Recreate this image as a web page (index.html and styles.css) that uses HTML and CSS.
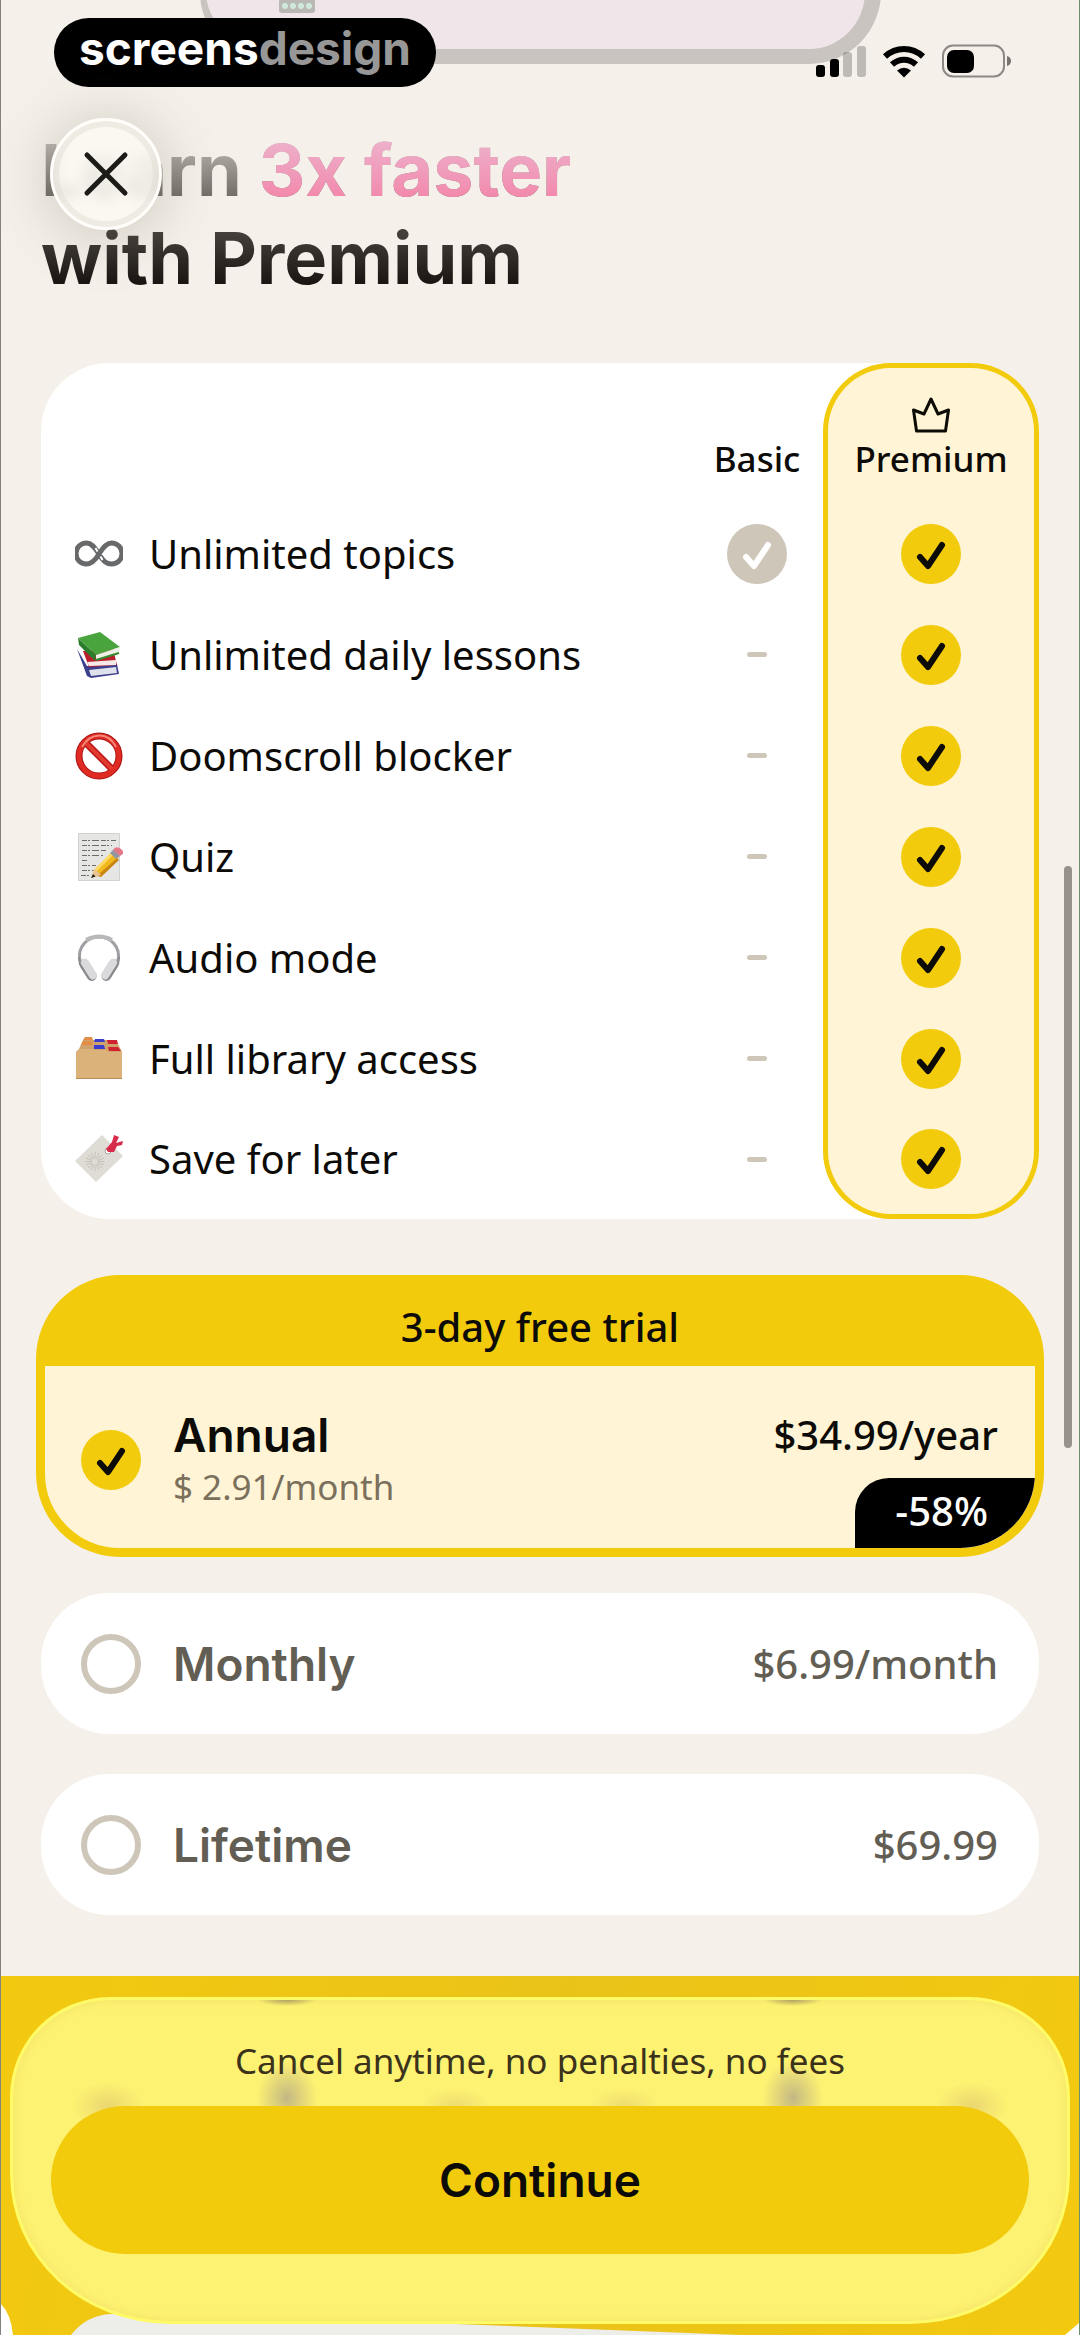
FILE: index.html
```html
<!DOCTYPE html>
<html lang="en">
<head>
<meta charset="utf-8">
<meta name="viewport" content="width=device-width, initial-scale=1">
<title>Learn 3x faster with Premium</title>
<link rel="stylesheet" href="styles.css">
</head>
<body>
<svg class="defs" aria-hidden="true">
  <symbol id="check" viewBox="0 0 60 60"><path d="M19 33 27 42 41 21" fill="none" stroke="currentColor" stroke-width="6" stroke-linecap="round" stroke-linejoin="round"/></symbol>
</svg>
<div class="page">
  <div class="device" aria-hidden="true"><span class="device-chip"><i></i><i></i><i></i><i></i></span></div>

  <div class="status">
    <div class="brand">screens<span>design</span></div>
    <div class="indicators" aria-hidden="true">
      <svg width="50" height="34" viewBox="0 0 50 34"><rect x="0" y="21" width="9" height="12" rx="3"/><rect x="14" y="15" width="9" height="18" rx="3"/><g opacity=".22"><rect x="27" y="8" width="9" height="25" rx="3"/><rect x="41" y="2" width="9" height="31" rx="3"/></g></svg>
      <svg width="44" height="34" viewBox="0 0 44 34"><path d="M3 12.500C14 2.500 30 2.500 41 12.500" fill="none" stroke="#000" stroke-width="6"/><path d="M10 20.500C17 14 27 14 34 20.500" fill="none" stroke="#000" stroke-width="6"/><path d="M15 26.500Q22 21 29 26.500L22 33.500Z"/></svg>
      <svg width="70" height="34" viewBox="0 0 70 34"><rect x="1" y="1.500" width="61" height="31" rx="10" fill="none" stroke="#8d8883" stroke-width="2"/><rect x="5" y="6" width="27" height="23" rx="7"/><path d="M65 12Q69 13 69 17T65 22Z" fill="#77726e"/></svg>
    </div>
  </div>

  <button class="close" type="button" aria-label="Close">
    <svg width="46" height="46" viewBox="0 0 46 46"><path d="M4 4 42 42M42 4 4 42" stroke="#1c1b17" stroke-width="5" stroke-linecap="round"/></svg>
  </button>

  <main>
    <h1><span class="line faded">Learn <em>3x faster</em></span><span class="line">with Premium</span></h1>

    <table class="compare">
      <colgroup><col><col class="col-basic"><col class="col-premium"></colgroup>
      <thead>
        <tr>
          <td></td>
          <th scope="col">Basic</th>
          <th scope="col"><svg class="crown" width="40" height="36" viewBox="0 0 40 36" aria-hidden="true"><path d="M20 2 27 17 37.500 13 34.500 34H5.500L2.500 13 13 17Z" fill="none" stroke="#0d0b05" stroke-width="3" stroke-linejoin="round"/></svg>Premium</th>
        </tr>
      </thead>
      <tbody>
        <tr>
          <th scope="row"><div class="feature">
            <svg viewBox="0 0 48 48"><path d="M24 24C19 16 16 13 11.500 13A10.500 10.500 0 0 0 11.500 34C17 34 21 29 24 24S31 13 36.500 13A10.500 10.500 0 0 1 36.500 34C31 34 28 31 24 24Z" fill="none" stroke="#68696b" stroke-width="5"/><path d="M20.500 18 22.500 21.500M25.500 26.500 27.500 30" stroke="#fff" stroke-width="2"/></svg>
            Unlimited topics</div></th>
          <td><span class="dot muted"><svg><use href="#check"/></svg></span></td>
          <td><span class="dot"><svg><use href="#check"/></svg></span></td>
        </tr>
        <tr>
          <th scope="row"><div class="feature">
            <svg viewBox="0 0 48 48"><path d="M2 18 12 35 42 33 44 43 16 47 12 45Z" fill="#3c3f8c"/><path d="M14 39 41 36 42 42 16 45Z" fill="#dfe2ec"/><path d="M8 20 38 18 42 34 14 36Z" fill="#ba1d2c"/><path d="M12 31 41 29 41 34 14 35Z" fill="#f7e9e8"/><path d="M3 7 21 24 20 30 4 14Z" fill="#2b7d2b"/><path d="M3 7 25 1 45 16 21 24Z" fill="#4aa43e"/><path d="M21 24 45 16 44 21 21 29Z" fill="#edf1e5"/><path d="M21 29 44 22" stroke="#388a31" stroke-width="2"/></svg>
            Unlimited daily lessons</div></th>
          <td><span class="dash"></span></td>
          <td><span class="dot"><svg><use href="#check"/></svg></span></td>
        </tr>
        <tr>
          <th scope="row"><div class="feature">
            <svg viewBox="0 0 48 48"><g fill="none"><circle cx="24" cy="24" r="20" stroke="#a91312" stroke-width="7"/><path d="M11 11 37 37" stroke="#b91614" stroke-width="7"/><circle cx="24" cy="24" r="20" stroke="#df2b23" stroke-width="5"/><path d="M11 11 37 37" stroke="#e23a2e" stroke-width="4"/><path d="M7 15Q13 4 24 3.500T41 15" stroke="#f4897a" stroke-width="2"/></g></svg>
            Doomscroll blocker</div></th>
          <td><span class="dash"></span></td>
          <td><span class="dot"><svg><use href="#check"/></svg></span></td>
        </tr>
        <tr>
          <th scope="row"><div class="feature">
            <svg viewBox="0 0 48 48"><path d="M3 0H45V48H3Z" fill="#e6e6e5"/><path d="M3.500.5H44.500V47.500H3.500Z" fill="none" stroke="#d2d2d1"/><g fill="none" stroke="#6c6c6c" stroke-dasharray="5 1 2 2 7 2"><path d="M7 7.500H41M7 12.500H37M7 17.500H31M7 22.500H28M7 27.500H13M7 32.500H21M7 37.500H20M6 42.500H15"/></g><path d="M16 45 20 36 38 18 44 24 26 42Z" fill="#f2b91d"/><path d="M18 38 36 20 38 22 20 40Z" fill="#ffdb63"/><path d="M22 43 42 25 44 27 26 44Z" fill="#c98411"/><path d="M16 45 20 36 26 42Z" fill="#e8c394"/><path d="M16 45 18 41 20.500 43.500Z" fill="#222"/><path d="M35 20 39 16 45 23 41 26Z" fill="#9298a0"/><path d="M38 17Q41 12 46 16T45 23Z" fill="#e4798a"/></svg>
            Quiz</div></th>
          <td><span class="dash"></span></td>
          <td><span class="dot"><svg><use href="#check"/></svg></span></td>
        </tr>
        <tr>
          <th scope="row"><div class="feature">
            <svg viewBox="0 0 48 48"><g fill="none"><path d="M5 27C2 12 13 3 24 3S46 12 43 27" stroke="#a0a0a4" stroke-width="3"/><path d="M11 6Q24-1 37 6" stroke="#b8b8bb" stroke-width="4"/><path d="M4 23 5 31M44 23 43 31" stroke="#8d8e92" stroke-width="2"/></g><rect x="-5" y="-12" width="10" height="24" rx="5" fill="#88898c" transform="translate(13 36) rotate(-32)"/><rect x="-5" y="-12" width="8" height="23" rx="4" fill="#dadadd" transform="translate(15 35) rotate(-32)"/><rect x="-5" y="-12" width="10" height="24" rx="5" fill="#88898c" transform="translate(35 36) rotate(32)"/><rect x="-3" y="-12" width="8" height="23" rx="4" fill="#dadadd" transform="translate(33 35) rotate(32)"/></svg>
            Audio mode</div></th>
          <td><span class="dash"></span></td>
          <td><span class="dot"><svg><use href="#check"/></svg></span></td>
        </tr>
        <tr>
          <th scope="row"><div class="feature">
            <svg viewBox="0 0 48 48"><path d="M4 14 8 5H41L47 17V44H1V17Z" fill="#d0a26b"/><path d="M6 10 8 6H16L18 10Z" fill="#e28e48"/><path d="M8 5 10 2H17L18 5Z" fill="#e28e48"/><path d="M20 4H29L30 7H19ZM19 10H29L30 14H19Z" fill="#3b3bd0"/><path d="M32 5H42L43 9H33ZM33 12H43L46 16H34Z" fill="#cf2330"/><path d="M1 17 4 14H18L20 15H31L34 17H47V44H1Z" fill="#dcb27b"/><path d="M1 43.500H47" stroke="#b98d57"/></svg>
            Full library access</div></th>
          <td><span class="dash"></span></td>
          <td><span class="dot"><svg><use href="#check"/></svg></span></td>
        </tr>
        <tr>
          <th scope="row"><div class="feature">
            <svg viewBox="0 0 48 48"><path d="M27 0 48 21 21 47 0 26Z" fill="#dfdcd6"/><g stroke="#c4c1b9"><path d="M20 17V36M10.500 26.500H29.500M13 20 27 33M27 20 13 33M16 18 24 35M24 18 16 35M11 23 29 30M29 23 11 30"/></g><circle cx="20" cy="26.500" r="3" fill="#dfdcd6"/><circle cx="33" cy="16" r="3" fill="#fff" stroke="#aaa69e"/><path d="M31 14 37 7 39 0 44 2 41 8 48 6 47 10 42 11 39 17 33 17Z" fill="#d82b4b"/></svg>
            Save for later</div></th>
          <td><span class="dash"></span></td>
          <td><span class="dot"><svg><use href="#check"/></svg></span></td>
        </tr>
      </tbody>
    </table>

    <form class="plans" id="plans">
      <label class="plan featured">
        <span class="trial">3-day free trial</span>
        <span class="plan-body">
          <span class="pick"><input type="radio" name="plan" value="annual" checked><svg><use href="#check"/></svg></span>
          <span class="plan-text"><span class="plan-name">Annual</span><span class="plan-note">$ 2.91/month</span></span>
          <span class="price">$34.99/year</span>
        </span>
        <span class="badge">-58%</span>
      </label>
      <label class="plan">
        <span class="plan-body">
          <span class="pick"><input type="radio" name="plan" value="monthly"></span>
          <span class="plan-name">Monthly</span>
          <span class="price">$6.99/month</span>
        </span>
      </label>
      <label class="plan">
        <span class="plan-body">
          <span class="pick"><input type="radio" name="plan" value="lifetime"></span>
          <span class="plan-name">Lifetime</span>
          <span class="price">$69.99</span>
        </span>
      </label>
    </form>
  </main>

  <footer>
    <svg class="clouds" viewBox="0 0 1080 40" preserveAspectRatio="none" aria-hidden="true"><path d="M0 9Q10 19 12 40H0Z" fill="#fff"/><path d="M70 40Q86 20 110 19H430L455 29 740 40Z" fill="#ededea"/><path d="M1066 40 1080 28V40Z" fill="#fff"/></svg>
    <div class="sheet">
      <p>Cancel anytime, no penalties, no fees</p>
      <button class="continue" type="submit" form="plans">Continue</button>
    </div>
  </footer>
  <div class="scrollbar" aria-hidden="true"></div>
</div>
</body>
</html>
```
FILE: styles.css
```css
:root {
  --yellow: #f3cb0d;
  --cream: #fff5d6;
  --ink: #0d0b07;
  --taupe: #cec6b8;
  --body: "Noto Sans", "Open Sans", sans-serif;
  --display: Inter, "Noto Sans", sans-serif;
}

* { box-sizing: border-box; }

body {
  margin: 0;
  background: #f5f0e9;
  color: var(--ink);
  font-family: var(--body);
}

.defs { position: absolute; width: 0; height: 0; }

.page {
  position: relative;
  overflow: hidden;
  border-left: 1px solid #86817b;
  border-right: 1px solid #6f8f6c;
}

/* Phone preview scrolled under the status bar */
.device {
  position: absolute;
  top: -80px;
  left: 18.500%;
  right: 18.400%;
  height: 144px;
  border: solid #cac4c0;
  border-width: 0 16px 15px 6px;
  border-radius: 0 0 72px 72px;
  background: #f0e6ea;
}

.device-chip {
  position: absolute;
  left: 73px;
  bottom: 36px;
  display: flex;
  gap: 2px;
  padding: 4px 3px;
  border-radius: 3px;
  background: #b9b8b4;
}

.device-chip i { width: 6px; height: 6px; border-radius: 3px; background: #cfe8dc; }

.status {
  position: relative;
  display: flex;
  justify-content: space-between;
  align-items: center;
  padding: 18px 67px 0 53px;
}

.brand {
  padding: 0 25px 9px;
  border-radius: 35px;
  background: #000;
  color: #fff;
  font: 700 46px/60px var(--display);
}

.brand span { color: #979797; }

.indicators { display: flex; gap: 16px; padding-top: 16px; }

.close {
  position: absolute;
  z-index: 1;
  top: 118px;
  left: 49px;
  display: grid;
  place-items: center;
  width: 112px;
  height: 112px;
  padding: 0;
  border: 3px solid #fffdf9;
  border-radius: 50%;
  background: rgba(253, 249, 243, .82);
  box-shadow: 0 4px 60px rgba(90, 85, 70, .28), inset 0 0 0 6px rgba(225, 221, 214, .5);
  backdrop-filter: blur(7px);
}

main { padding: 39px 40px 61px; }

h1 {
  margin: 0 0 61px;
  font: 700 72px/88px var(--display);
}

.line {
  display: block;
  background: linear-gradient(#45403a 20%, #1a1512 80%);
  background-clip: text;
  color: transparent;
}

.faded { background-image: linear-gradient(#b9b4ae 20%, #6d6861 85%); }

em {
  background: linear-gradient(#edb2cc 15%, #f387ab 85%);
  background-clip: text;
  font-style: normal;
}

.compare {
  width: 100%;
  table-layout: fixed;
  border-spacing: 0;
  border-radius: 68px;
  background: #fff;
}

.col-basic { width: 132px; }
.col-premium { width: 216px; }

.compare th, .compare td { padding: 0; font-weight: 400; text-align: center; }

.compare thead th {
  height: 140px;
  padding-bottom: 21px;
  vertical-align: bottom;
  font-size: 35px;
  font-weight: 500;
  line-height: 46px;
}

.crown { display: block; margin: 0 auto 3px; }

.compare tbody td { height: 101px; }

.compare tr > :last-child {
  border: solid var(--yellow);
  border-width: 0 5px;
  background: var(--cream);
}

.compare thead tr > :last-child { border-top-width: 5px; border-radius: 68px 68px 0 0; }
.compare tbody tr:last-child > * { padding-bottom: 10px; height: 110px; }
.compare tbody tr:last-child > :last-child { padding-bottom: 5px; border-bottom-width: 5px; border-radius: 0 0 68px 68px; }

.feature {
  display: flex;
  align-items: center;
  gap: 26px;
  padding-left: 34px;
  font-size: 40px;
  line-height: 54px;
  text-align: left;
}

.feature svg { flex: none; width: 48px; height: 48px; }

.dot {
  display: grid;
  width: 60px;
  height: 60px;
  margin: auto;
  border-radius: 50%;
  background: var(--yellow);
}

.dot svg, .pick svg { width: 60px; height: 60px; }
.muted { background: var(--taupe); color: #fff; }

.dash {
  display: block;
  width: 20px;
  height: 5px;
  margin: auto;
  border-radius: 3px;
  background: var(--taupe);
}

.plans {
  display: grid;
  gap: 40px;
  margin-top: 56px;
}

.plan {
  position: relative;
  display: block;
  border-radius: 68px;
  background: #fff;
  color: #625e54;
}

.featured {
  margin: 0 -5px -4px;
  overflow: hidden;
  border: 9px solid var(--yellow);
  border-radius: 84px;
  background: linear-gradient(var(--yellow) 82px, var(--cream) 82px);
  color: var(--ink);
}

.trial {
  display: block;
  padding-top: 4px;
  font-size: 40px;
  font-weight: 500;
  line-height: 78px;
  text-align: center;
}

.plan-body {
  display: flex;
  align-items: center;
  gap: 32px;
  min-height: 141px;
  padding: 0 41px 0 40px;
}

.featured .plan-body { padding: 42px 37px 36px 36px; }

.pick, .pick > * { grid-area: 1 / 1; }
.pick { display: grid; }

.pick input {
  appearance: none;
  width: 60px;
  height: 60px;
  margin: 0;
  border: 6px solid var(--taupe);
  border-radius: 50%;
}

.pick input:checked { border: 0; background: var(--yellow); }
.pick svg { position: relative; pointer-events: none; }

.plan-text { display: grid; }
.plan-name { font: 600 46px/54px var(--display); }
.plan-note { color: #7b705c; font-size: 35px; line-height: 50px; }
.price { margin-left: auto; font-size: 40px; font-weight: 500; line-height: 54px; }
.featured .price { align-self: flex-start; }

.badge {
  position: absolute;
  right: 0;
  bottom: 0;
  padding: 0 47px 4px 40px;
  border-radius: 34px 0 0 0;
  background: #000;
  color: #fff;
  font-size: 40px;
  font-weight: 500;
  line-height: 66px;
}

footer {
  position: relative;
  padding: 21px 9px 11px;
  background: linear-gradient(100deg, #f3c910, #e9c318 50%, #f3c910);
}

.clouds { position: absolute; left: 0; bottom: 0; width: 100%; height: 40px; }

.sheet {
  position: relative;
  padding: 36px 38px 67px;
  border: 3px solid #fffb68;
  border-radius: 100px 100px 160px 160px / 100px 100px 150px 150px;
  background:
    radial-gradient(30px 38px at 26% 98px, rgba(140, 125, 150, .5), transparent),
    radial-gradient(30px 38px at 74% 98px, rgba(140, 125, 150, .5), transparent),
    radial-gradient(30px 6px at 26% 0, rgba(120, 105, 90, .6), transparent),
    radial-gradient(30px 6px at 74% 0, rgba(120, 105, 90, .6), transparent),
    radial-gradient(36px 24px at 9% 106px, rgba(190, 150, 110, .3), transparent),
    radial-gradient(36px 24px at 91% 106px, rgba(190, 150, 110, .3), transparent),
    radial-gradient(34px 18px at 42% 106px, rgba(190, 150, 110, .25), transparent),
    radial-gradient(34px 18px at 58% 106px, rgba(190, 150, 110, .25), transparent),
    #fdf272;
  box-shadow: inset 0 0 10px rgba(215, 180, 70, .25);
}

.sheet p {
  margin: 0 0 20px;
  color: #3b321c;
  font-size: 35px;
  line-height: 50px;
  text-align: center;
}

.continue {
  display: block;
  width: 100%;
  padding: 0;
  border: 0;
  border-radius: 74px;
  background: var(--yellow);
  color: var(--ink);
  font: 600 46px/148px var(--display);
}

.scrollbar {
  position: absolute;
  top: 866px;
  right: 7px;
  width: 8px;
  height: 582px;
  border-radius: 4px;
  background: #97928c;
}
```
